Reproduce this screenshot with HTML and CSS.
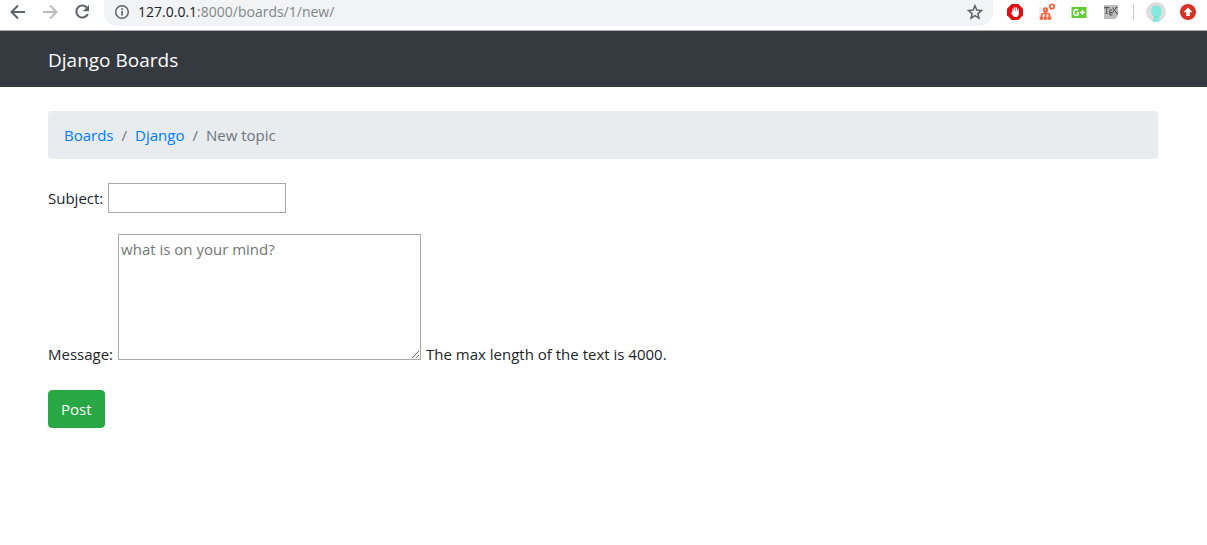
FILE: index.html
```html
<!DOCTYPE html>
<html lang="en">
<head>
<meta charset="utf-8">
<meta name="viewport" content="width=device-width, initial-scale=1">
<title>Django Boards</title>
<link rel="stylesheet" href="styles.css">
</head>
<body>
<div class="toolbar">
  <div class="nav-buttons">
    <button class="tool" type="button" aria-label="Back"><svg width="20" height="20" viewBox="0 0 20 20" fill="none" stroke="#5f6368" stroke-width="2"><path d="M17 10H4M10 3.500L3.500 10l6.500 6.500"/></svg></button>
    <button class="tool" type="button" aria-label="Forward"><svg width="20" height="20" viewBox="0 0 20 20" fill="none" stroke="#babcbe" stroke-width="2"><path d="M3 10h13M10 3.500l6.500 6.500-6.500 6.500"/></svg></button>
    <button class="tool" type="button" aria-label="Reload"><svg width="20" height="20" viewBox="0 0 20 20"><path d="M15.300 6.200A6 6 0 1 0 15.800 12" fill="none" stroke="#5f6368" stroke-width="2"/><path d="M17 3v6.300h-6.300z" fill="#5f6368"/></svg></button>
  </div>
  <div class="address">
    <svg width="16" height="16" viewBox="0 0 16 16"><circle cx="8" cy="8" r="6.300" fill="none" stroke="#5f6368" stroke-width="1.500"/><path d="M7.200 7h1.700v4.500H7.200zM7.200 4.300h1.700v1.600H7.200z" fill="#5f6368"/></svg>
    <span class="url"><span class="host">127.0.0.1</span>:8000/boards/1/new/</span>
    <button class="tool" type="button" aria-label="Bookmark"><svg width="20" height="20" viewBox="0 0 20 20" fill="none" stroke="#5f6368" stroke-width="1.500"><path d="M10 3.800l1.800 4.300 4.700.4-3.600 3.100 1.100 4.600-4-2.500-4 2.500 1.100-4.600-3.600-3.100 4.700-.4z"/></svg></button>
  </div>
  <div class="extensions">
    <button class="tool" type="button" aria-label="Ad blocker"><svg width="20" height="20" viewBox="0 0 20 20"><path d="M6.700 2h6.600L18 6.700v6.600L13.300 18H6.700L2 13.300V6.700z" fill="#e40d13"/><path d="M8 11V6.800M9.700 10V5.500M11.400 10V5.800M13.100 11V7" stroke="#fff" stroke-width="1.200" stroke-linecap="round"/><path d="M7.400 9h6.300v2.500c0 2-.8 3.500-2.200 3.500H10c-1.500 0-2.500-1.500-4-4.200.7-.6 1.200-.2 1.400.2z" fill="#fff"/></svg></button>
    <button class="tool" type="button" aria-label="Site map"><svg width="20" height="20" viewBox="0 0 20 20"><path d="M2 5h12v13H2z" fill="#f0f0f2"/><g fill="none" stroke="#f4633f"><circle cx="8.500" cy="7.800" r="1.700" stroke-width="1.900"/><circle cx="15" cy="4.500" r="2.200" stroke-width="1.800"/><path d="M8.500 9.500V15M4.500 15v-1.500c0-1.500 1-2 2-2h4c1 0 2 .5 2 2V15" stroke-width="1.700"/><path d="M3.500 15.500h2v1.500h-2zM7.500 15.500h2v1.500h-2zM11.500 15.500h2v1.500h-2z" stroke-width="1.400"/></g></svg></button>
    <button class="tool" type="button" aria-label="G plus"><svg width="20" height="20" viewBox="0 0 20 20"><path d="M2.500 5h15v11h-15z" fill="#5fce32"/><path d="M9.100 8.400C7.500 6.700 4.700 7.700 4.700 10.500s2.800 3.600 4.600 2.200v-2H7.500M11 10.500h5M13.500 8v5" fill="none" stroke="#fff" stroke-width="1.500"/></svg></button>
    <button class="tool" type="button" aria-label="TeX"><svg width="20" height="20" viewBox="0 0 20 20"><path d="M3 3h14v11l-3 3H3z" fill="#bcbcbc"/><path d="M3.500 6.500V5.500h4.500v1M5.700 5.500V11.500M4.700 11.500h2M11.200 8H8.800v5h2.600M8.800 10.500h2.200M11.500 5.500l4.500 6M15.500 5.500l-4.500 6M15 11.500h2M14.500 5.500h2" fill="none" stroke="#505050"/></svg></button>
    <span class="divider"></span>
    <button class="tool" type="button" aria-label="Profile"><svg width="20" height="20" viewBox="0 0 20 20"><circle cx="10" cy="10" r="10" fill="#dedede"/><path d="M10.500 3.500c3.500 0 5 2.300 5 5.500 0 2.600-.8 4.500-1.800 6L13.500 19.300l-3.500.7-4-.8c1.800-1.200 2.300-2.700 1.800-4.700C6.200 13.500 5.300 11.500 5.300 9c0-3.200 1.700-5.500 5.200-5.500z" fill="#82e9dc"/><path d="M8 14.800c1.500.8 3 .3 4.200-1M8.500 16l-.8 3" fill="none" stroke="#62cfc3" stroke-width=".8"/></svg></button>
    <button class="tool" type="button" aria-label="Update"><svg width="20" height="20" viewBox="0 0 20 20"><circle cx="10" cy="10" r="8" fill="#d93025"/><path d="M10 5.500l4.500 4.700h-2.700V14H8.200v-3.800H5.500z" fill="#fff"/></svg></button>
  </div>
</div>
<header class="navbar">
  <div class="container"><a class="brand" href="#">Django Boards</a></div>
</header>
<main class="container">
  <nav aria-label="Breadcrumb">
    <ol class="breadcrumb">
      <li><a href="#">Boards</a></li>
      <li><a href="#">Django</a></li>
      <li aria-current="page">New topic</li>
    </ol>
  </nav>
  <form>
    <p class="field">
      <label for="subject">Subject:</label>
      <input class="control" id="subject" type="text">
    </p>
    <p class="field message">
      <label for="message">Message:</label>
      <textarea class="control" id="message" placeholder="what is on your mind?" aria-describedby="help"></textarea>
      <span id="help">The max length of the text is 4000.</span>
    </p>
    <button class="post" type="button">Post</button>
  </form>
</main>
</body>
</html>
```
FILE: styles.css
```css
* {
  box-sizing: border-box;
}

body {
  margin: 0;
  background: #fff;
  color: #212529;
  font: 15px/24px "Segoe UI", "Open Sans", "Noto Sans", sans-serif;
}

a {
  color: #007bff;
  text-decoration: none;
}

.toolbar {
  display: flex;
  height: 31px;
  padding: 0 9px 4px 8px;
  border-bottom: 1px solid #a9abaf;
}

.nav-buttons,
.extensions {
  display: flex;
  align-items: center;
  gap: 12px;
  height: 24px;
}

.tool {
  display: flex;
  padding: 0;
  border: 0;
  background: none;
}

.address {
  display: flex;
  flex: 1;
  align-items: center;
  gap: 8px;
  height: 26px;
  margin: 0 12px;
  padding: 0 8px 2px 10px;
  border-radius: 0 0 14px 14px;
  background: #f1f3f4;
}

.url {
  flex: 1;
  color: #80868b;
  font-size: 14px;
}

.host {
  color: #202124;
}

.divider {
  width: 1px;
  height: 16px;
  background: #c8cacd;
}

.container {
  width: 100%;
  max-width: 1141px;
  margin: 0 auto;
  padding: 0 16px 0 15px;
}

.navbar {
  padding: 14px 0 12px;
  background: #343a40;
}

.brand {
  display: block;
  color: #fff;
  font-size: 19px;
  line-height: 30px;
}

.breadcrumb {
  display: flex;
  margin: 24px 0;
  padding: 12px 16px;
  border-radius: 4px;
  background: #e9ecef;
  color: #6c757d;
  list-style: none;
}

.breadcrumb li + li::before {
  content: "/";
  padding: 0 8px;
}

.field {
  display: flex;
  align-items: center;
  gap: 5px;
  margin: 0 0 21px;
}

.message {
  align-items: flex-end;
  margin-bottom: 30px;
}

.message label,
.message span {
  line-height: 12px;
}

.control {
  width: 178px;
  height: 30px;
  padding: 2px;
  border: 1px solid #a9a9a9;
  border-radius: 0;
  background: #fff;
  color: inherit;
  font: inherit;
}

textarea.control {
  width: 303px;
  height: 126px;
}

.control::placeholder {
  color: #757575;
}

.post {
  padding: 6px 12px;
  border: 1px solid #28a745;
  border-radius: 4px;
  background: #28a745;
  color: #fff;
  font: inherit;
}
```
